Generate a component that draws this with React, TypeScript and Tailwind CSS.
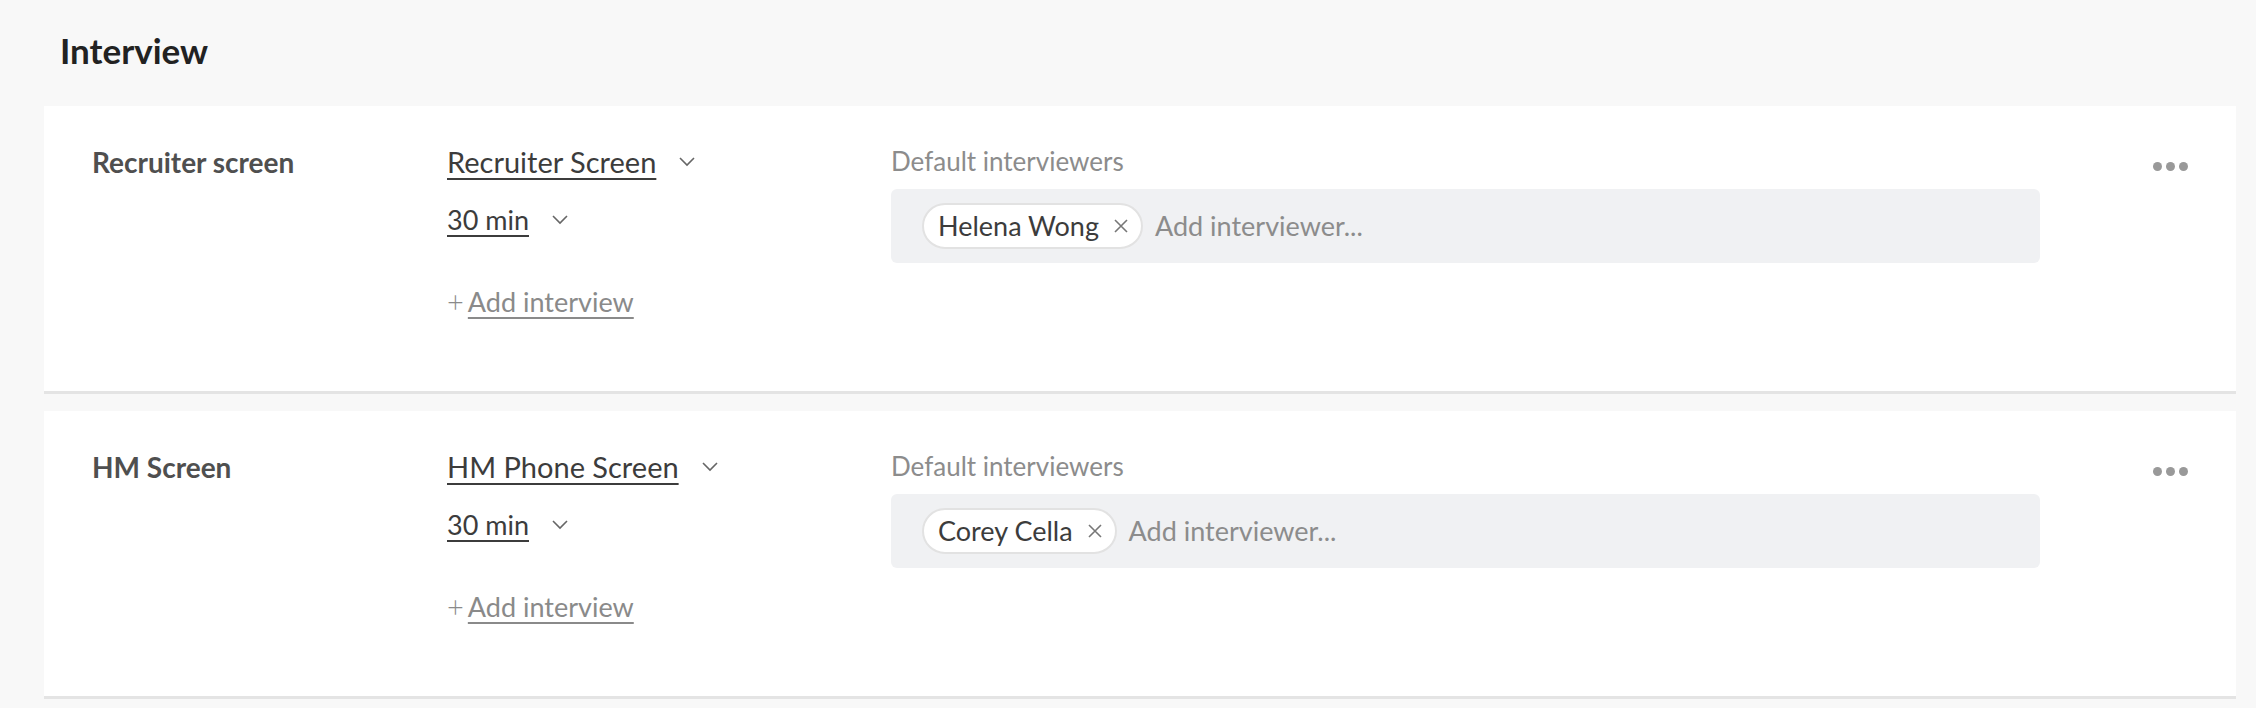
import React from "react";

const Chevron = () => (
  <svg width="18" height="12" viewBox="0 0 18 12" fill="none" stroke="#666" strokeWidth="1.6"><path d="M2 2l7 7 7-7" /></svg>
);

const Row = ({ title, type, person }: { title: string; type: string; person: string }) => (
  <div className="bg-white border-b-[3px] border-[#e4e4e4] h-[288px] flex pt-[38px] relative">
    <div className="w-[403px] pl-[48px] text-[28px] font-bold text-[#4f4f4f] leading-[36px]">{title}</div>
    <div className="w-[444px] flex flex-col">
      <div className="flex items-center gap-[22px] h-[36px]">
        <span className="text-[29px] text-[#3c3c3c] underline underline-offset-[5px] decoration-[2px]">{type}</span>
        <Chevron />
      </div>
      <div className="flex items-center gap-[22px] h-[36px] mt-[22px]">
        <span className="text-[27px] text-[#3c3c3c] underline underline-offset-[5px] decoration-[2px]">30 min</span>
        <Chevron />
      </div>
      <div className="flex items-center h-[36px] mt-[46px] text-[27px] text-[#8a8a8a]">
        <span className="mr-[4px] text-[29px] font-light">+</span>
        <span className="underline underline-offset-[5px] decoration-[1.5px]">Add interview</span>
      </div>
    </div>
    <div className="w-[1149px] flex flex-col">
      <div className="text-[26px] text-[#8c8c8c] leading-[34px]">Default interviewers</div>
      <div className="mt-[11px] h-[74px] bg-[#f0f1f3] rounded-[6px] flex items-center pl-[31px]">
        <div className="h-[46px] bg-white border-2 border-[#e2e2e2] rounded-full flex items-center pl-[14px] pr-[12px] gap-[14px]">
          <span className="text-[27px] text-[#3c3c3c]">{person}</span>
          <svg width="16" height="16" viewBox="0 0 16 16" stroke="#777" strokeWidth="1.6"><path d="M2 2l12 12M14 2L2 14" /></svg>
        </div>
        <span className="ml-[12px] text-[27px] text-[#8c8c8c]">Add interviewer...</span>
      </div>
    </div>
    <div className="absolute right-[48px] top-[56px] flex gap-[4px]">
      <span className="w-[9px] h-[9px] rounded-full bg-[#999]" />
      <span className="w-[9px] h-[9px] rounded-full bg-[#999]" />
      <span className="w-[9px] h-[9px] rounded-full bg-[#999]" />
    </div>
  </div>
);

export default function App() {
  return (
    <div className="w-[2256px] h-[708px] bg-[#f8f8f8] overflow-hidden" style={{ fontFamily: "Lato, 'Liberation Sans', sans-serif" }}>
      <div className="pl-[60px] h-[106px] pt-[28px] text-[35px] font-bold text-[#222] leading-[44px]">Interview</div>
      <div className="ml-[44px] w-[2192px] flex flex-col gap-[17px]">
        <Row title="Recruiter screen" type="Recruiter Screen" person="Helena Wong" />
        <Row title="HM Screen" type="HM Phone Screen" person="Corey Cella" />
      </div>
    </div>
  );
}
